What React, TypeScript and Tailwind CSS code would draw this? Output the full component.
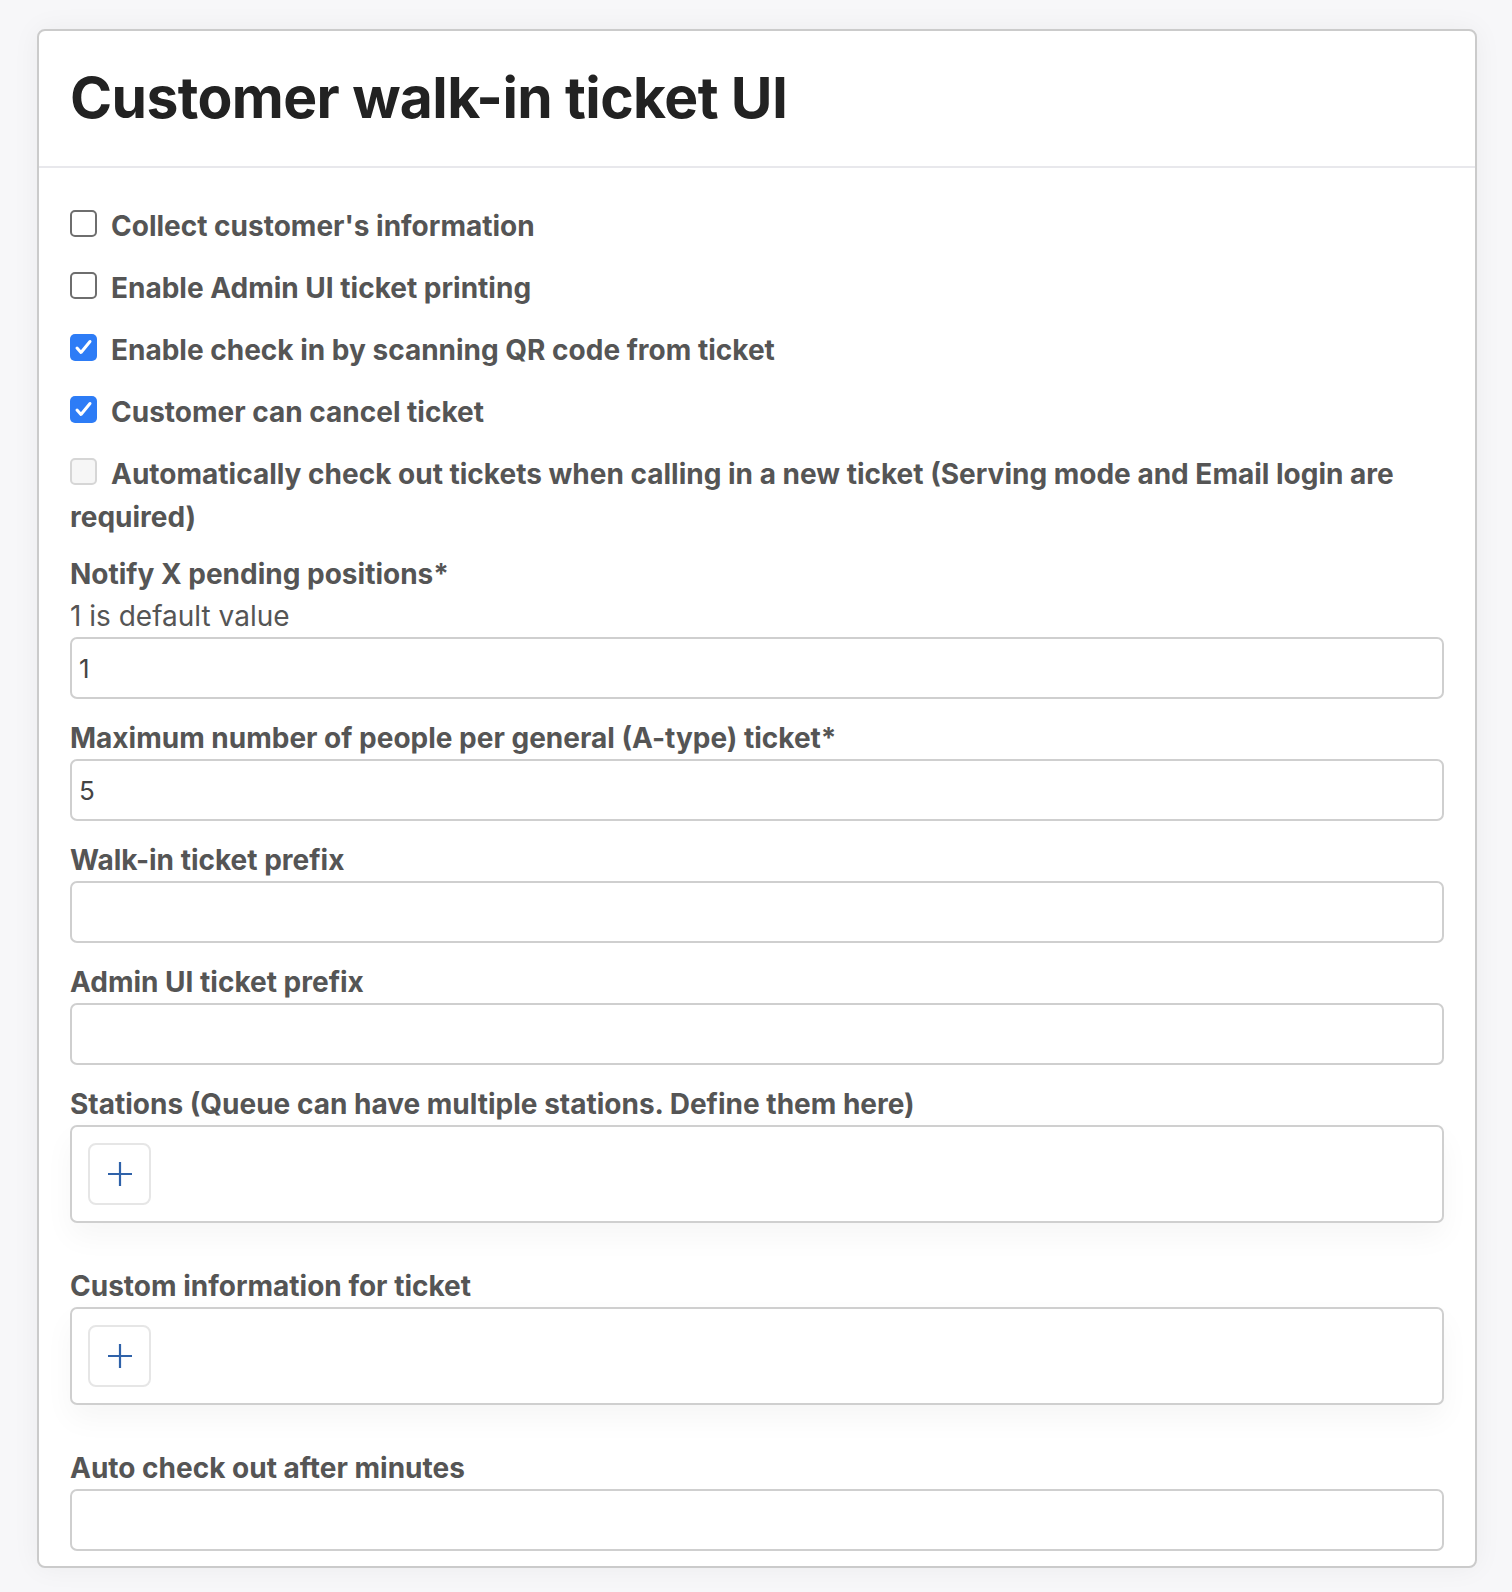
import React from "react";

const font = { fontFamily: "Inter, 'Noto Sans', sans-serif" };

function Box({ state }: { state: "off" | "on" | "disabled" }) {
  if (state === "on")
    return (
      <span className="inline-block h-[27px] w-[27px] rounded-[5px] bg-[#2d7cf6] align-[-1px] mr-[14px]">
        <svg className="block" width="27" height="27" viewBox="0 0 27 27" fill="none">
          <path d="M7 14l4 4.5L20 7.5" stroke="white" strokeWidth="3" strokeLinecap="round" strokeLinejoin="round" />
        </svg>
      </span>
    );
  return (
    <span
      className={
        "inline-block h-[27px] w-[27px] rounded-[5px] border-2 align-[-1px] mr-[14px] " +
        (state === "disabled" ? "border-[#d6d6d6] bg-[#f6f6f6]" : "border-[#6e6e6e] bg-white")
      }
    />
  );
}

const checks: Array<{ text: string; state: "off" | "on" | "disabled" }> = [
  { text: "Collect customer's information", state: "off" },
  { text: "Enable Admin UI ticket printing", state: "off" },
  { text: "Enable check in by scanning QR code from ticket", state: "on" },
  { text: "Customer can cancel ticket", state: "on" },
  { text: "Automatically check out tickets when calling in a new ticket (Serving mode and Email login are required)", state: "disabled" },
];

function Label({ children }: { children: React.ReactNode }) {
  return <div className="text-[28px] leading-[42px] font-bold text-[#555]">{children}</div>;
}

function Field({ label, value, hint, last }: { label: string; value?: string; hint?: string; last?: boolean }) {
  return (
    <div className={last ? "pb-[15px]" : "pb-[18px]"}>
      <Label>{label}</Label>
      {hint && <div className="text-[28px] leading-[42px] text-[#555]">{hint}</div>}
      <div className="h-[62px] rounded-[7px] border-2 border-[#cfcfcf] bg-white px-[7px] flex items-center text-[26px] text-[#444]">
        {value}
      </div>
    </div>
  );
}

function AddBox({ label }: { label: string }) {
  return (
    <div className="pb-[42px]">
      <Label>{label}</Label>
      <div className="h-[98px] rounded-[7px] border-2 border-[#cfcfcf] bg-white px-[16px] flex items-center shadow-[0_14px_30px_rgba(0,0,0,0.04)]">
        <button className="h-[62px] w-[63px] rounded-[8px] border-2 border-[#e6e6e6] bg-white flex items-center justify-center">
          <svg width="26" height="26" viewBox="0 0 26 26">
            <path d="M13 1v24M1 13h24" stroke="#2f62a9" strokeWidth="2.2" />
          </svg>
        </button>
      </div>
    </div>
  );
}

export default function App() {
  return (
    <div className="min-h-[1592px] bg-[#f7f7f9] pl-[37px] pr-[35px] pt-[29px] pb-[24px]" style={font}>
      <div className="rounded-[8px] border-2 border-[#cbcbcb] bg-white shadow-[0_0_28px_rgba(0,0,0,0.05)]">
        <div className="h-[137px] border-b-2 border-[#e8e8ec] px-[31px] flex items-center">
          <h1 className="text-[57px] font-bold tracking-[-0.6px] text-[#222] pb-[2px]">Customer walk-in ticket UI</h1>
        </div>
        <div className="px-[31px] pt-[37px]">
          {checks.map((c) => (
            <div key={c.text} className="mb-[19px] text-[28px] leading-[43px] font-bold text-[#555]">
              <Box state={c.state} />
              {c.text}
            </div>
          ))}
          <div className="-mt-[5px]" />
          <Field label="Notify X pending positions*" hint="1 is default value" value="1" />
          <Field label="Maximum number of people per general (A-type) ticket*" value="5" />
          <Field label="Walk-in ticket prefix" />
          <Field label="Admin UI ticket prefix" />
          <AddBox label="Stations (Queue can have multiple stations. Define them here)" />
          <AddBox label="Custom information for ticket" />
          <Field label="Auto check out after minutes" last />
        </div>
      </div>
    </div>
  );
}
